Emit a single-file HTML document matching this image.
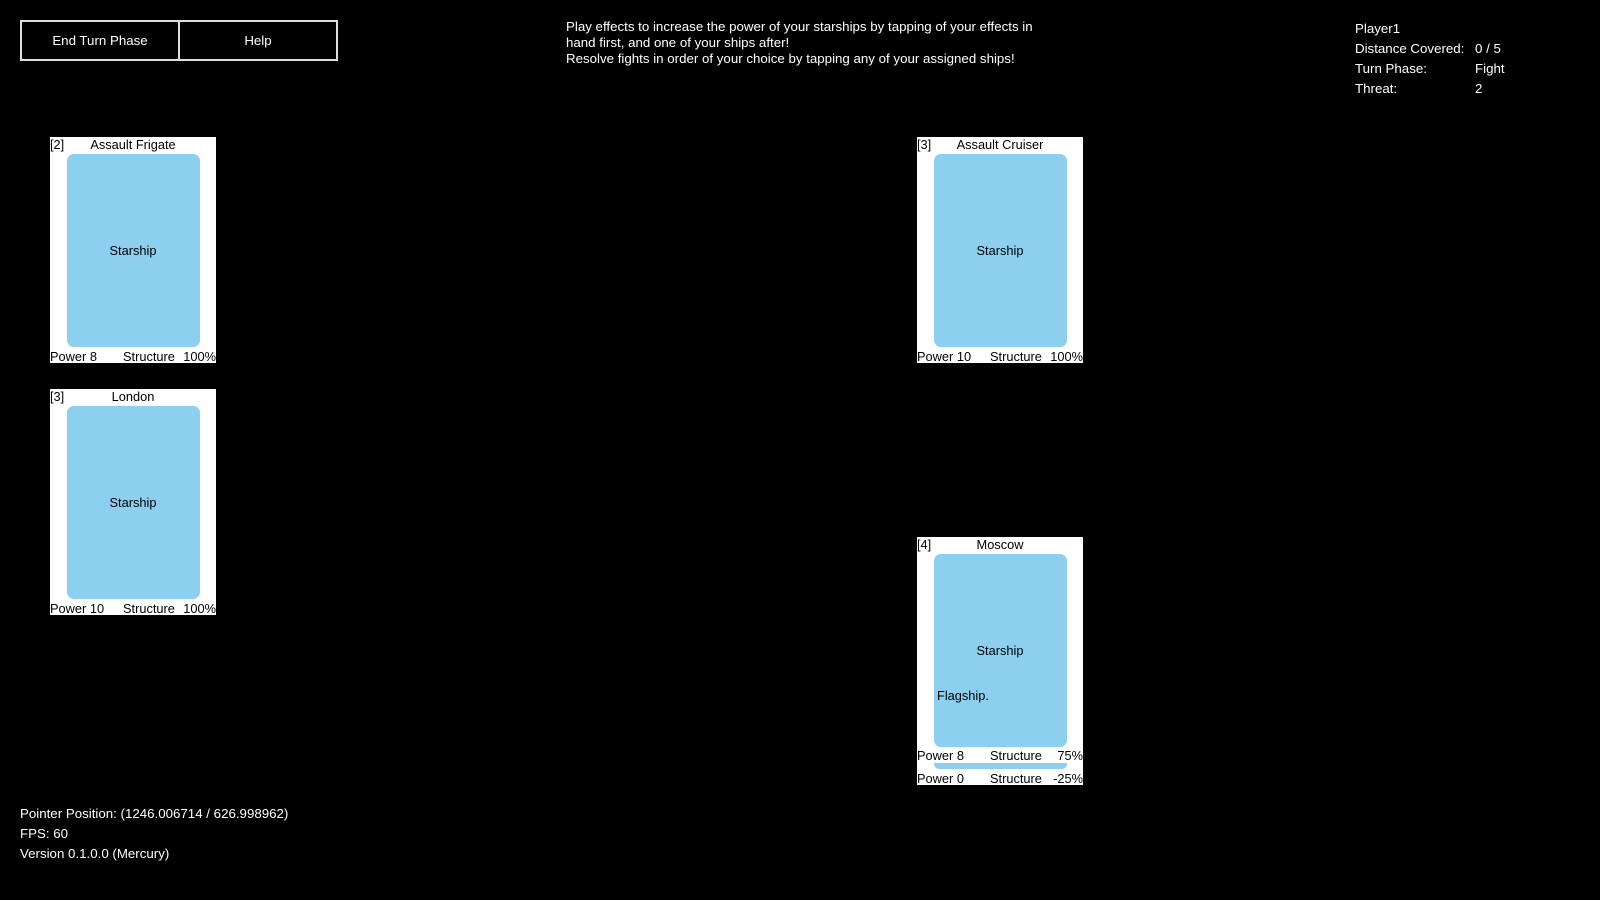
<!DOCTYPE html>
<html><head><meta charset="utf-8"><style>
body{margin:0;width:1600px;height:900px;background:#000;overflow:hidden;font-family:"Liberation Sans",Arial,sans-serif;color:#fff;font-size:13.3px;position:relative}
.a{position:absolute;white-space:nowrap}
.btn{position:absolute;top:20px;height:37px;border:2px solid #ddd;box-sizing:content-box;display:flex;align-items:center;justify-content:center;font-size:13.3px}
.card{position:absolute;width:166px;height:226px;background:#fff;color:#000;font-size:12.8px}
.card .blue{position:absolute;left:17px;width:133px;top:17px;height:193px;background:#8ccfee;border-radius:7px}
.card .t{position:absolute;white-space:nowrap;line-height:15px}
</style></head><body>
<div class="btn" style="left:20px;width:156px">End Turn Phase</div>
<div class="btn" style="left:178px;width:156px">Help</div>
<div class="a" style="left:566px;top:19px;line-height:16px">Play effects to increase the power of your starships by tapping of your effects in<br>hand first, and one of your ships after!<br>Resolve fights in order of your choice by tapping any of your assigned ships!</div>
<div class="a" style="left:1355px;top:19px;line-height:20px">Player1<br>Distance Covered:<br>Turn Phase:<br>Threat:</div>
<div class="a" style="left:1475px;top:39px;line-height:20px">0 / 5<br>Fight<br>2</div>
<div class="a" style="left:20px;top:804px;line-height:20px">Pointer Position: (1246.006714 / 626.998962)<br>FPS: 60<br>Version 0.1.0.0 (Mercury)</div>

<div class="card" style="left:50px;top:137px">
<div class="blue"></div>
<div class="t" style="left:0;top:0">[2]</div><div class="t" style="left:0;width:166px;text-align:center;top:0">Assault Frigate</div>
<div class="t" style="left:0;width:166px;text-align:center;top:106px">Starship</div>
<div class="t" style="left:0;top:212px">Power 8</div><div class="t" style="left:73px;top:212px">Structure</div><div class="t" style="right:0;top:212px">100%</div>
</div>
<div class="card" style="left:50px;top:389px">
<div class="blue"></div>
<div class="t" style="left:0;top:0">[3]</div><div class="t" style="left:0;width:166px;text-align:center;top:0">London</div>
<div class="t" style="left:0;width:166px;text-align:center;top:106px">Starship</div>
<div class="t" style="left:0;top:212px">Power 10</div><div class="t" style="left:73px;top:212px">Structure</div><div class="t" style="right:0;top:212px">100%</div>
</div>
<div class="card" style="left:917px;top:137px">
<div class="blue"></div>
<div class="t" style="left:0;top:0">[3]</div><div class="t" style="left:0;width:166px;text-align:center;top:0">Assault Cruiser</div>
<div class="t" style="left:0;width:166px;text-align:center;top:106px">Starship</div>
<div class="t" style="left:0;top:212px">Power 10</div><div class="t" style="left:73px;top:212px">Structure</div><div class="t" style="right:0;top:212px">100%</div>
</div>
<div class="card" style="left:917px;top:537px;height:248px">
<div class="blue"></div>
<div style="position:absolute;left:17px;width:133px;top:226px;height:6px;background:#8ccfee;border-radius:0 0 5px 5px"></div>
<div class="t" style="left:0;top:0">[4]</div><div class="t" style="left:0;width:166px;text-align:center;top:0">Moscow</div>
<div class="t" style="left:0;width:166px;text-align:center;top:106px">Starship</div>
<div class="t" style="left:20px;top:151px">Flagship.</div>
<div class="t" style="left:0;top:211px">Power 8</div><div class="t" style="left:73px;top:211px">Structure</div><div class="t" style="right:0;top:211px">75%</div>
<div class="t" style="left:0;top:234px">Power 0</div><div class="t" style="left:73px;top:234px">Structure</div><div class="t" style="right:0;top:234px">-25%</div>
</div>
</body></html>
